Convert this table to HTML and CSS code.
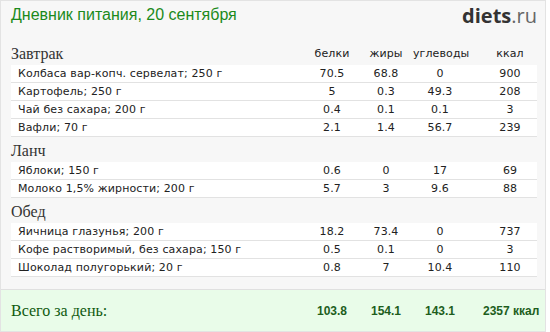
FILE: index.html
```html
<!DOCTYPE html>
<html lang="ru">
<head>
<meta charset="utf-8">
<title>Дневник питания</title>
<link rel="stylesheet" href="styles.css">
</head>
<body>
<div class="card">
  <div class="top">
    <div class="title">Дневник питания, 20 сентября</div>
    <div class="logo"><b>diets</b>.ru</div>
  </div>

  <div class="section">
    <div class="head grid">
      <div class="meal">Завтрак</div>
      <div class="n lbl">белки</div>
      <div class="n lbl">жиры</div>
      <div class="n lbl">углеводы</div>
      <div class="n lbl last">ккал</div>
    </div>
    <div class="row grid"><div class="name">Колбаса вар-копч. сервелат; 250 г</div><div class="n">70.5</div><div class="n">68.8</div><div class="n">0</div><div class="n last">900</div></div>
    <div class="row grid"><div class="name">Картофель; 250 г</div><div class="n">5</div><div class="n">0.3</div><div class="n">49.3</div><div class="n last">208</div></div>
    <div class="row grid"><div class="name">Чай без сахара; 200 г</div><div class="n">0.4</div><div class="n">0.1</div><div class="n">0.1</div><div class="n last">3</div></div>
    <div class="row grid"><div class="name">Вафли; 70 г</div><div class="n">2.1</div><div class="n">1.4</div><div class="n">56.7</div><div class="n last">239</div></div>
  </div>

  <div class="section">
    <div class="head grid"><div class="meal">Ланч</div></div>
    <div class="row grid"><div class="name">Яблоки; 150 г</div><div class="n">0.6</div><div class="n">0</div><div class="n">17</div><div class="n last">69</div></div>
    <div class="row grid"><div class="name">Молоко 1,5% жирности; 200 г</div><div class="n">5.7</div><div class="n">3</div><div class="n">9.6</div><div class="n last">88</div></div>
  </div>

  <div class="section">
    <div class="head grid"><div class="meal">Обед</div></div>
    <div class="row grid"><div class="name">Яичница глазунья; 200 г</div><div class="n">18.2</div><div class="n">73.4</div><div class="n">0</div><div class="n last">737</div></div>
    <div class="row grid"><div class="name">Кофе растворимый, без сахара; 150 г</div><div class="n">0.5</div><div class="n">0.1</div><div class="n">0</div><div class="n last">3</div></div>
    <div class="row grid"><div class="name">Шоколад полугорький; 20 г</div><div class="n">0.8</div><div class="n">7</div><div class="n">10.4</div><div class="n last">110</div></div>
  </div>

  <div class="total">
    <div class="grid">
      <div class="total-label">Всего за день:</div>
      <div class="n tn">103.8</div>
      <div class="n tn">154.1</div>
      <div class="n tn">143.1</div>
      <div class="n tn last">2357&nbsp;ккал</div>
    </div>
  </div>
</div>
</body>
</html>
```

FILE: styles.css
```css
html, body {
  margin: 0;
  padding: 0;
  background: #ffffff;
}

.card {
  width: 544px;
  height: 330px;
  border: 1px solid #e3e3e3;
  background: #f7f7f7;
  display: flex;
  flex-direction: column;
  box-sizing: content-box;
}

.top {
  height: 39px;
  box-sizing: border-box;
  padding: 5px 8px 0 10px;
  display: flex;
  justify-content: space-between;
  align-items: flex-start;
}

.title {
  font-family: "Liberation Sans", Arial, sans-serif;
  font-size: 16px;
  line-height: 18px;
  color: #1b8a1b;
}

.logo {
  font-family: "Open Sans", "Liberation Sans", sans-serif;
  font-size: 20px;
  line-height: 24px;
  color: #666;
  margin-top: -2px;
}

.logo b {
  color: #333;
  font-weight: 700;
}

.section {
  padding: 0 8px 0 10px;
}

.grid {
  display: grid;
  grid-template-columns: 1fr 54px 54px 54px 70px;
  align-items: center;
}

.head {
  height: 25px;
}

.meal {
  font-family: "Liberation Serif", "Times New Roman", serif;
  font-size: 16px;
  color: #333;
  padding-top: 2px;
}

.lbl {
  padding-top: 2px;
}

.n {
  font-family: "DejaVu Sans", Verdana, sans-serif;
  font-size: 11px;
  color: #222;
  text-align: center;
  letter-spacing: 0.1px;
}

.n.last {
  padding-left: 16px;
}

.row {
  height: 17px;
  background: #ffffff;
  border-bottom: 1px solid #e2e2e2;
}

.name {
  font-family: "DejaVu Sans", Verdana, sans-serif;
  font-size: 11px;
  color: #222;
  padding-left: 7px;
  white-space: nowrap;
  letter-spacing: 0.12px;
}

.total {
  margin-top: auto;
  height: 41px;
  border-top: 1px solid #e0e0e0;
  background: #e9fce9;
  padding: 0 8px 0 10px;
  display: flex;
  flex-direction: column;
  justify-content: center;
}

.total-label {
  font-family: "Liberation Serif", "Times New Roman", serif;
  font-size: 16px;
  color: #0f5a0f;
}

.tn {
  font-family: "Liberation Sans", Arial, sans-serif;
  font-weight: 700;
  font-size: 12px;
  color: #1d5e1d;
  letter-spacing: 0;
}
```
